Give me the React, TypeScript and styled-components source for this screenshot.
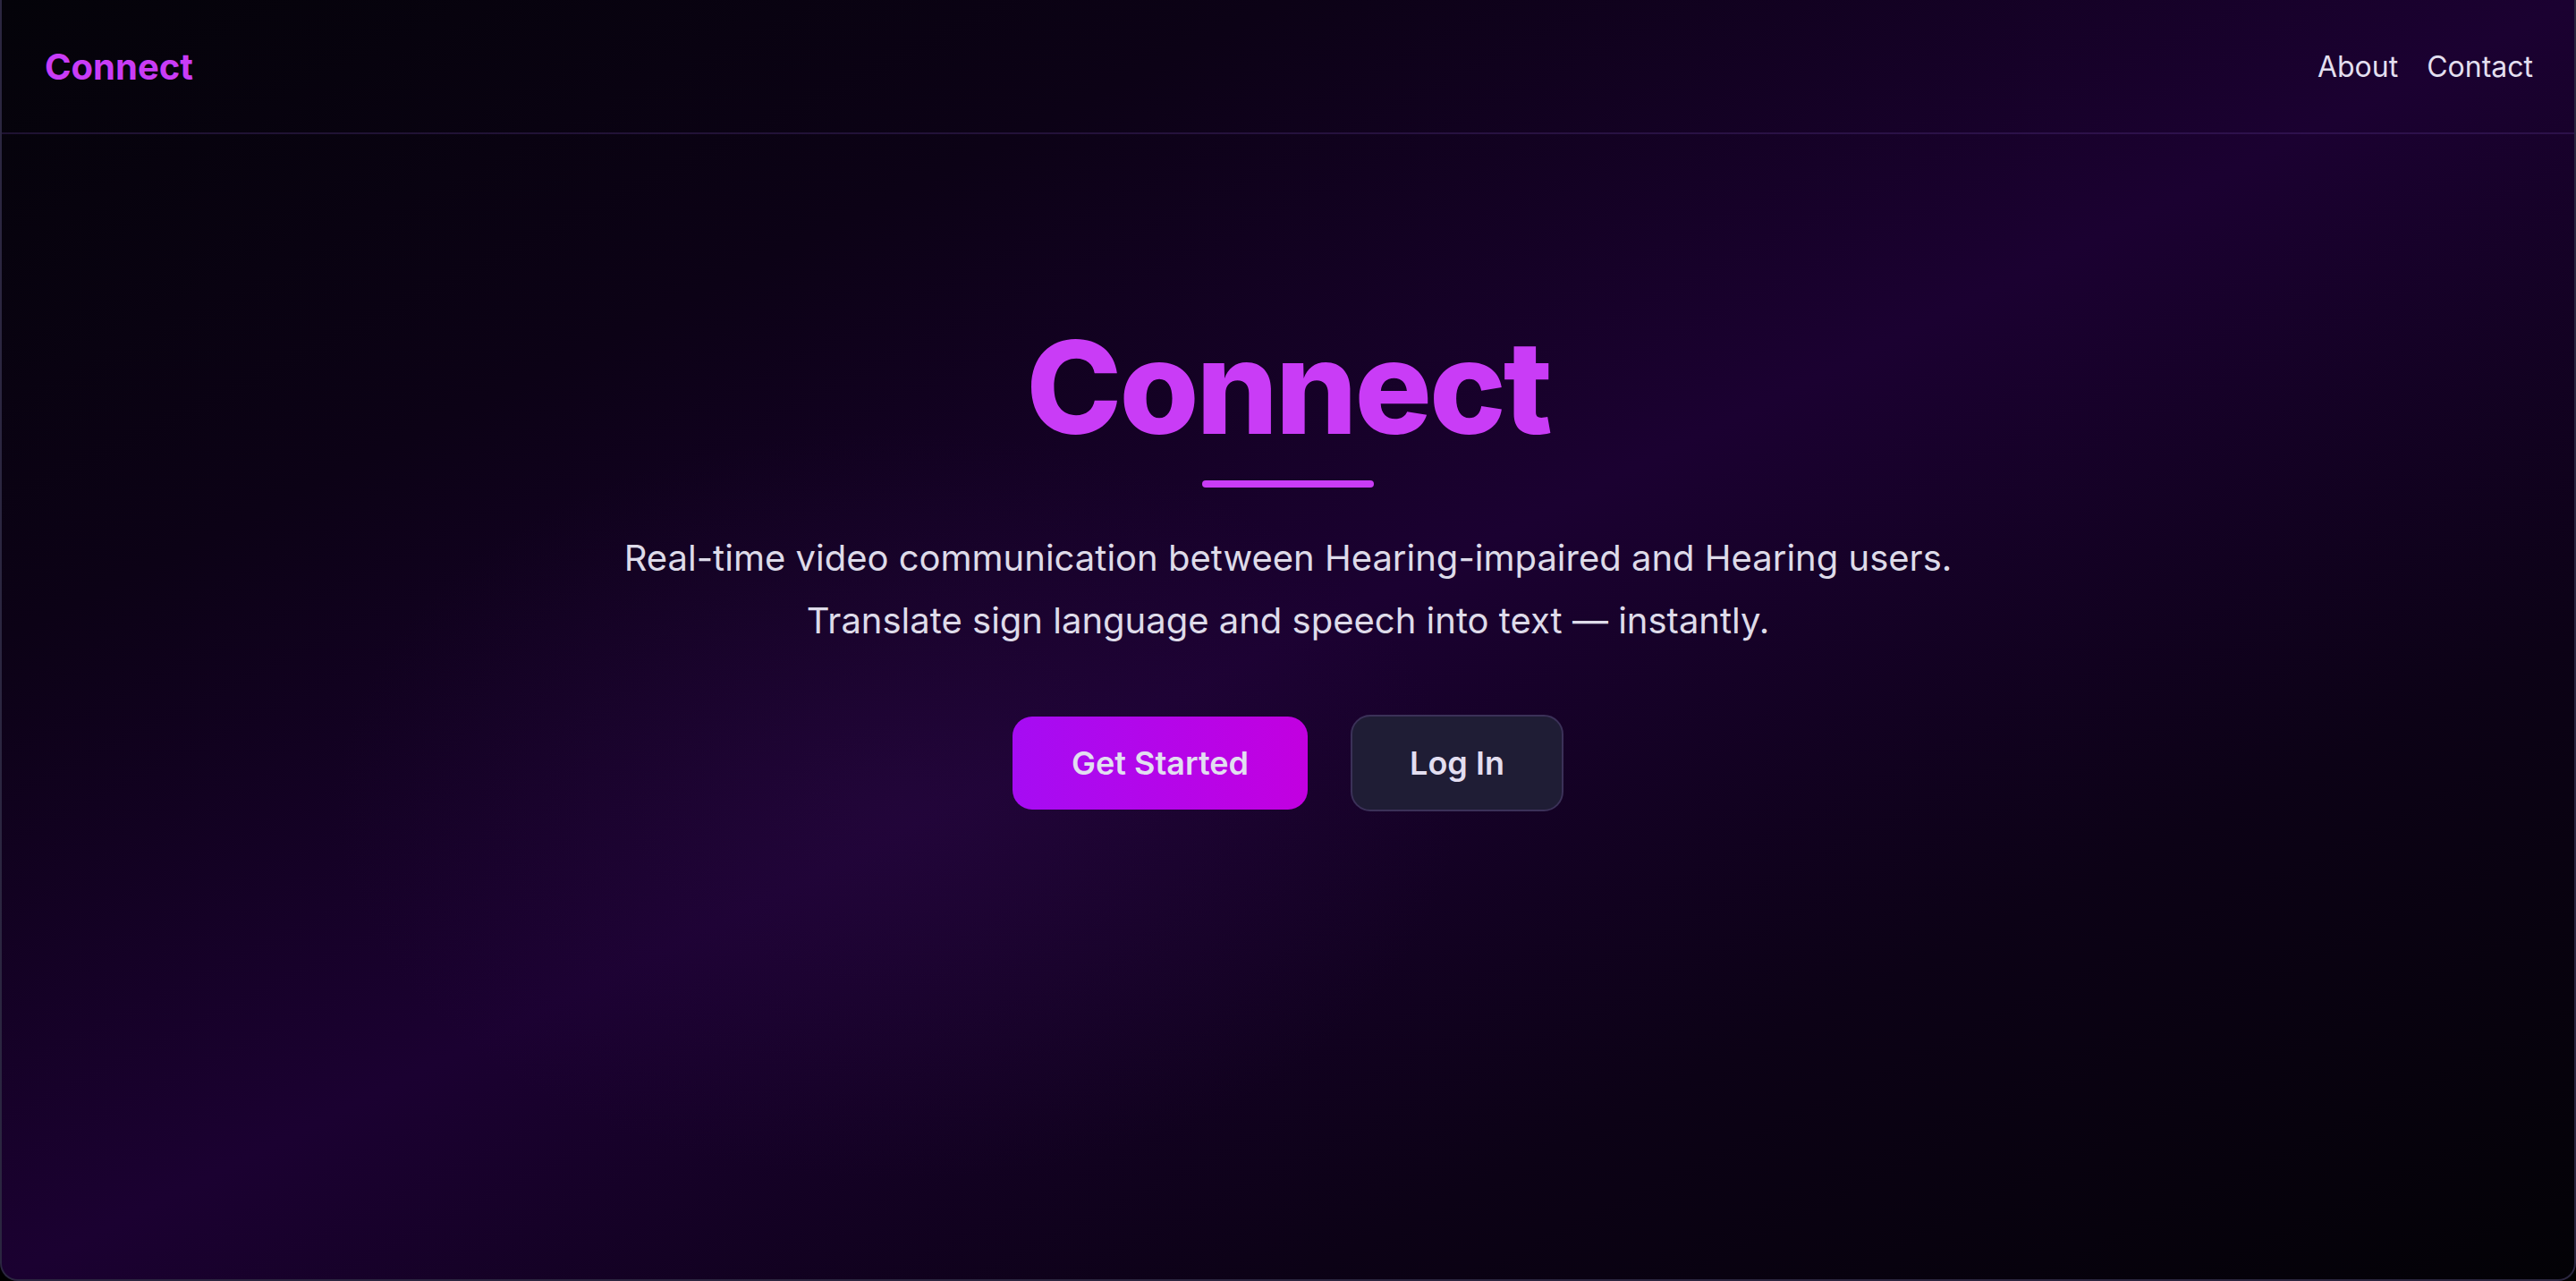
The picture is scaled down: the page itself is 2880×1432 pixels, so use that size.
import React, { FC } from 'react';
import styled, { createGlobalStyle } from 'styled-components';

const GlobalStyle = createGlobalStyle`
    * {
        box-sizing: border-box;
    }

    html, body {
        margin: 0;
        padding: 0;
        background: #000;
    }

    body {
        font-family: Inter, "Noto Sans", "Liberation Sans", sans-serif;
        -webkit-font-smoothing: antialiased;
    }
`;

const navLinks = ['About', 'Contact'];

const App: FC = () => {
    return (
        <>
            <GlobalStyle />
            <Frame>
                <NavBar>
                    <Logo>Connect</Logo>
                    <NavLinks>
                        {navLinks.map((link) => (
                            <NavLink key={link} href="#">
                                {link}
                            </NavLink>
                        ))}
                    </NavLinks>
                </NavBar>
                <Hero>
                    <Title>Connect</Title>
                    <Underline />
                    <Tagline>
                        Real-time video communication between Hearing-impaired and Hearing users.
                        <br />
                        Translate sign language and speech into text — instantly.
                    </Tagline>
                    <Actions>
                        <Button variant="primary">Get Started</Button>
                        <Button variant="secondary">Log In</Button>
                    </Actions>
                </Hero>
            </Frame>
        </>
    );
};

const Frame = styled.div`
    position: relative;
    display: flex;
    flex-direction: column;
    height: 1432px;
    overflow: hidden;
    border: 2px solid #2b2640;
    border-top: none;
    border-radius: 0 0 20px 20px;
    background:
        radial-gradient(ellipse 900px 600px at 1000px 900px, rgba(60, 20, 90, 0.22), transparent 70%),
        linear-gradient(to bottom right, #040309 0%, #0c0216 25%, #1b0131 50%, #0c0216 75%, #030206 100%);
`;

const NavBar = styled.header`
    display: flex;
    align-items: center;
    justify-content: space-between;
    height: 150px;
    padding: 0 46px 0 48px;
    border-bottom: 2px solid rgba(98, 60, 150, 0.28);
`;

const Logo = styled.div`
    font-size: 40px;
    font-weight: 700;
    color: #c93cf6;
`;

const NavLinks = styled.nav`
    display: flex;
    gap: 32px;
`;

const NavLink = styled.a`
    font-size: 32px;
    color: #e3dfef;
    text-decoration: none;
`;

const Hero = styled.main`
    display: flex;
    flex-direction: column;
    align-items: center;
    padding-top: 211px;
    text-align: center;
`;

const Title = styled.h1`
    margin: 0;
    font-size: 144px;
    line-height: 1;
    font-weight: 800;
    color: #c93cf6;
    letter-spacing: -3px;
`;

const Underline = styled.div`
    width: 192px;
    height: 8px;
    margin-top: 32px;
    border-radius: 4px;
    background: #c93cf6;
`;

const Tagline = styled.p`
    margin: 44px 0 0;
    font-size: 40px;
    line-height: 70px;
    color: #dedbe9;
`;

const Actions = styled.div`
    display: flex;
    align-items: center;
    gap: 48px;
    margin-top: 70px;
`;

const Button = styled.button<{ variant: 'primary' | 'secondary' }>`
    font-family: inherit;
    font-size: 36px;
    line-height: 56px;
    font-weight: 600;
    color: #e2def0;
    padding: ${(p) => (p.variant === 'primary' ? '24px 66px' : '24px 64px')};
    border-radius: 22px;
    cursor: pointer;
    border: ${(p) => (p.variant === 'primary' ? 'none' : '2px solid #3b3158')};
    background: ${(p) =>
        p.variant === 'primary'
            ? 'linear-gradient(90deg, #a60cf3, #c200e0)'
            : '#1f1d35'};
`;

export default App;
